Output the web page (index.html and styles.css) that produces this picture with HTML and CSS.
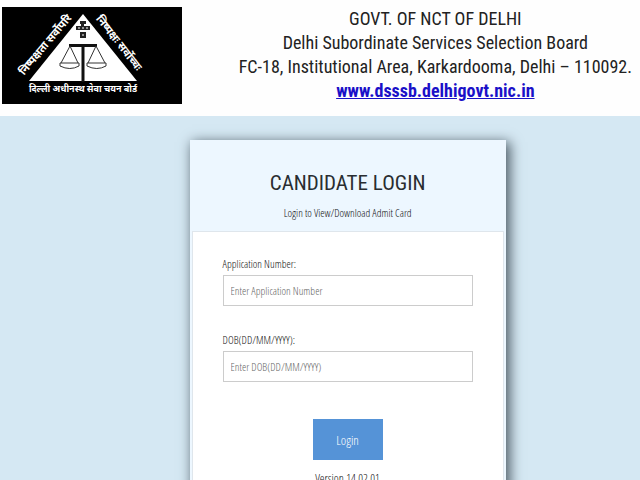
FILE: index.html
```html
<!DOCTYPE html>
<html lang="en">
<head>
    <meta charset="UTF-8">
    <meta name="viewport" content="width=device-width, initial-scale=1.0">
    <title>Candidate Login</title>
    <link rel="stylesheet" href="styles.css">
</head>
<body>
    <header class="site-header">
        <div class="logo">
            <svg viewBox="0 0 180 97" role="img" aria-label="DSSSB">
                <path d="M81 7L135 74H27Z" fill="#fff"/>
                <!-- crest -->
                <path d="M78 14h6v3h-2v2h6v4h-14v-4h5v-2h-1zM78 25h6v6h-6z" fill="#222"/>
                <path d="M76 21h2M80 21h2M84 21h2M80 28h2" stroke="#fff"/>
                <!-- scales -->
                <path d="M67 38.500h28M81 38v37" fill="none" stroke="#111" stroke-width="3"/>
                <path d="M68 39L59 56M68 39L76 56M94 39L86 56M94 39L103 56" fill="none" stroke="#333"/>
                <path d="M58 56h19v3q-9 5-19 0zM85 56h19v3q-9 5-19 0z" fill="#fff" stroke="#333"/>
                <g class="logo-text">
                    <text x="46" y="40" transform="rotate(-50 46 40)">निष्पक्षता सर्वोपरि</text>
                    <text x="114" y="38" transform="rotate(52 114 38)">निष्पक्षः सर्वोच्चः</text>
                    <text class="logo-name" x="81" y="85">दिल्ली अधीनस्थ सेवा चयन बोर्ड</text>
                </g>
            </svg>
        </div>
        <div class="site-title">
            <p>GOVT. OF NCT OF DELHI</p>
            <p>Delhi Subordinate Services Selection Board</p>
            <p>FC-18, Institutional Area, Karkardooma, Delhi – 110092.</p>
            <p><a href="http://www.dsssb.delhigovt.nic.in">www.dsssb.delhigovt.nic.in</a></p>
        </div>
    </header>

    <main class="login-box">
        <div class="login-head">
            <h1>CANDIDATE LOGIN</h1>
            <p>Login to View/Download Admit Card</p>
        </div>
        <form class="login-form">
            <label for="appNumber">Application Number:</label>
            <input type="text" id="appNumber" placeholder="Enter Application Number">
            <label for="dob">DOB(DD/MM/YYYY):</label>
            <input type="text" id="dob" placeholder="Enter DOB(DD/MM/YYYY)">
            <button type="submit">Login</button>
            <p class="version">Version 14.02.01</p>
        </form>
    </main>
</body>
</html>
```
FILE: styles.css
```css
* {
    box-sizing: border-box;
}

body {
    margin: 0;
    background-color: #d5e8f3;
    color: #111;
    font-family: "Open Sans Condensed Light", "Open Sans", sans-serif;
    font-size: 11px;
    line-height: 14px;
}

h1, p {
    margin: 0;
}

.site-header {
    display: flex;
    justify-content: space-between;
    align-items: flex-start;
    padding: 7px 8px 12px 2px;
    background-color: #fefefe;
}

.logo {
    flex: 0 0 180px;
    background-color: #000;
}

.logo svg {
    display: block;
    width: 100%;
}

.logo-text {
    fill: #fff;
    font-family: "Noto Sans Devanagari", "Noto Sans", sans-serif;
    font-size: 11px;
    font-weight: bold;
    text-anchor: middle;
}

.logo-name {
    font-size: 9px;
}

.site-title {
    color: #222;
    font-family: "Roboto Condensed", "Liberation Sans", sans-serif;
    font-size: 18px;
    line-height: 24px;
    text-align: center;
}

.site-title a {
    color: #1a10c8;
    font-weight: bold;
}

.login-box {
    width: 49%;
    min-width: 316px;
    margin: 24px 21% 0 auto;
    padding: 0 2px;
    background-color: #edf7ff;
    box-shadow: 3px 3px 12px 1px #4d5c66;
}

.login-head {
    padding: 28px 0 11px;
    text-align: center;
}

.login-head h1 {
    color: #292d31;
    font-family: "Roboto Condensed", "Open Sans", sans-serif;
    font-size: 21px;
    font-weight: normal;
    line-height: 30px;
    margin-bottom: 8px;
}

.login-form {
    display: flex;
    flex-direction: column;
    padding: 25px 30px 40px;
    border: 1px solid #dfe6ec;
    background-color: #fff;
}

.login-form label {
    margin-bottom: 4px;
}

.login-form input {
    height: 31px;
    margin-bottom: 27px;
    padding: 0 7px;
    border: 1px solid #ccc;
    font: inherit;
}

.login-form input::placeholder {
    color: #666;
}

.login-form button {
    align-self: center;
    width: 70px;
    height: 41px;
    margin: 10px 0 12px;
    border: 0;
    background-color: #5593d7;
    color: #fff;
    font: inherit;
    font-size: 13px;
}

.version {
    font-size: 12px;
    text-align: center;
}
```
